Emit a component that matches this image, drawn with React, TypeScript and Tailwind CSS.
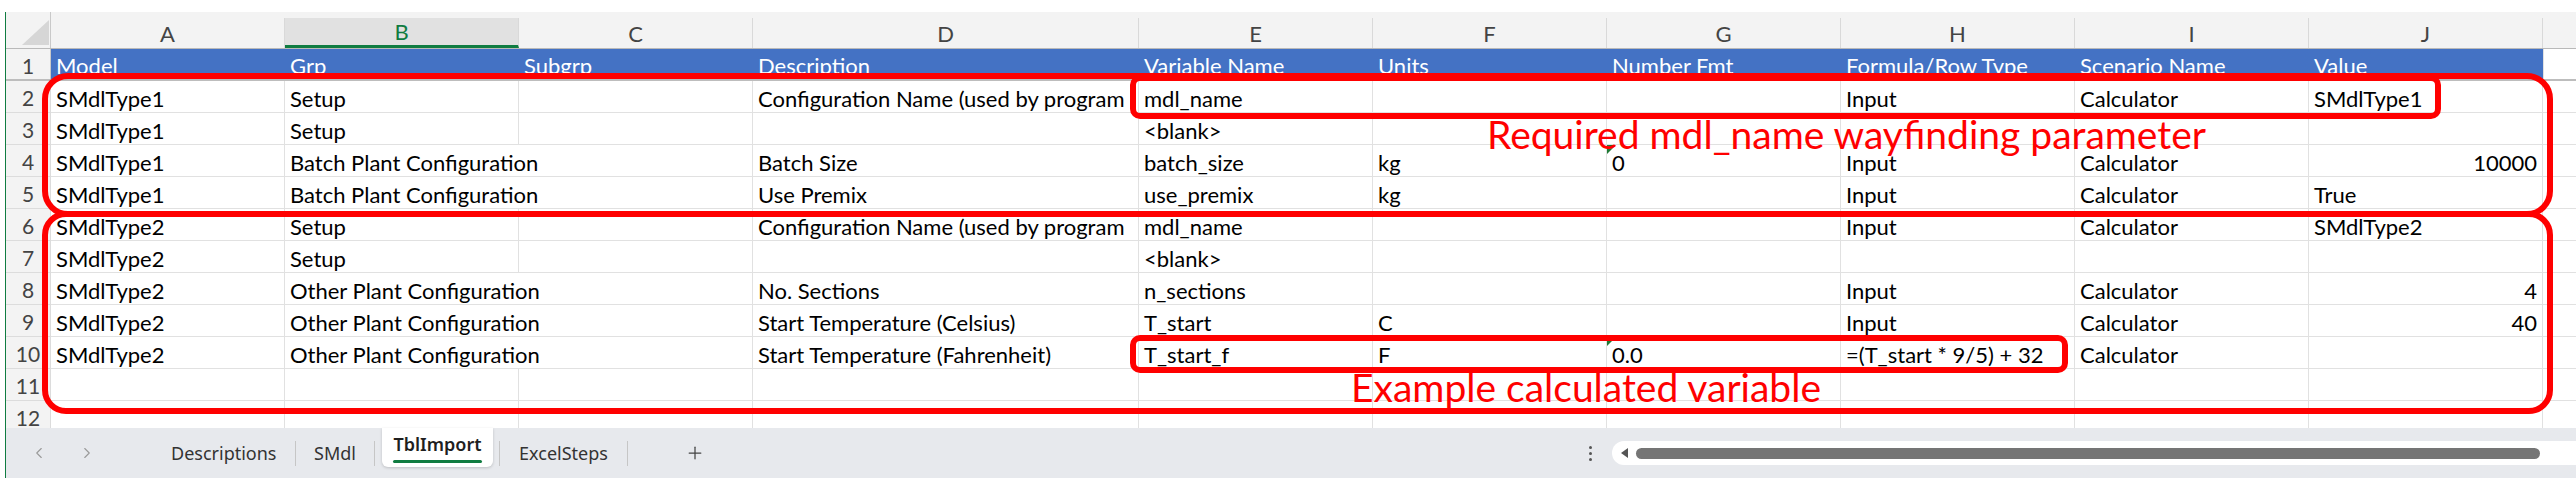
import { ChevronLeft, ChevronRight, Plus } from 'lucide-react'

type Col = 'A' | 'B' | 'C' | 'D' | 'E' | 'F' | 'G' | 'H' | 'I' | 'J' | 'K'

const COLS: Col[] = ['A', 'B', 'C', 'D', 'E', 'F', 'G', 'H', 'I', 'J', 'K']

const WIDTH: Record<Col, string> = {
  A: 'w-[234px]',
  B: 'w-[234px]',
  C: 'w-[234px]',
  D: 'w-[386px]',
  E: 'w-[234px]',
  F: 'w-[234px]',
  G: 'w-[234px]',
  H: 'w-[234px]',
  I: 'w-[234px]',
  J: 'w-[234px]',
  K: 'w-[60px]',
}

const HEADER = ['Model', 'Grp', 'Subgrp', 'Description', 'Variable Name', 'Units', 'Number Fmt', 'Formula/Row Type', 'Scenario Name', 'Value']

// A..J per row, row 2 onwards
const ROWS: string[][] = [
  ['SMdlType1', 'Setup', '', 'Configuration Name (used by program', 'mdl_name', '', '', 'Input', 'Calculator', 'SMdlType1'],
  ['SMdlType1', 'Setup', '', '', '<blank>', '', '', '', '', ''],
  ['SMdlType1', 'Batch Plant Configuration', '', 'Batch Size', 'batch_size', 'kg', '0', 'Input', 'Calculator', '10000'],
  ['SMdlType1', 'Batch Plant Configuration', '', 'Use Premix', 'use_premix', 'kg', '', 'Input', 'Calculator', 'True'],
  ['SMdlType2', 'Setup', '', 'Configuration Name (used by program', 'mdl_name', '', '', 'Input', 'Calculator', 'SMdlType2'],
  ['SMdlType2', 'Setup', '', '', '<blank>', '', '', '', '', ''],
  ['SMdlType2', 'Other Plant Configuration', '', 'No. Sections', 'n_sections', '', '', 'Input', 'Calculator', '4'],
  ['SMdlType2', 'Other Plant Configuration', '', 'Start Temperature (Celsius)', 'T_start', 'C', '', 'Input', 'Calculator', '40'],
  ['SMdlType2', 'Other Plant Configuration', '', 'Start Temperature (Fahrenheit)', 'T_start_f', 'F', '0.0', '=(T_start * 9/5) + 32', 'Calculator', ''],
  ['', '', '', '', '', '', '', '', '', ''],
  ['', '', '', '', '', '', '', '', '', ''],
]

const cellFont = "font-['Lato','Liberation_Sans',sans-serif]"

function GreenMark() {
  return (
    <svg className="absolute left-0 top-0" width="9" height="9" viewBox="0 0 9 9">
      <path d="M0 0H9L0 9Z" fill="#1f7a35" />
    </svg>
  )
}

function RowNum({ n, last }: { n: number; last?: boolean }) {
  return (
    <div
      className={`w-[45px] shrink-0 h-full flex items-center justify-center bg-[#f3f3f3] border-r border-[#c9c9c9] text-[21px] text-[#444] ${last ? '' : 'border-b border-[#dcdcdc]'}`}
    >
      <span className="pt-[3px]">{n}</span>
    </div>
  )
}

function DataRow({ n, cells }: { n: number; cells: string[] }) {
  const merged = cells[1].length > 12 && cells[2] === ''
  return (
    <div className="flex h-[32px] shrink-0">
      <RowNum n={n} />
      {COLS.map((c, i) => {
        if (c === 'C' && merged) return null
        const t = c === 'K' ? '' : cells[i]
        const w = c === 'B' && merged ? 'w-[468px]' : WIDTH[c]
        const right = c === 'J' && /^\d+$/.test(t)
        const mark = c === 'G' && (t === '0' || t === '0.0')
        return (
          <div
            key={c}
            className={`${w} shrink-0 h-full relative flex items-center px-[5px] border-r border-b border-[#e1e1e1] overflow-hidden whitespace-nowrap text-black ${right ? 'justify-end' : ''}`}
          >
            {mark && <GreenMark />}
            <span className="pt-[3px]">{t}</span>
          </div>
        )
      })}
    </div>
  )
}

function Sep() {
  return <span className="w-px h-[25px] bg-[#c6c6c6] shrink-0" />
}

export default function App() {
  return (
    <div className={`relative w-[2576px] h-[478px] overflow-hidden bg-white ${cellFont}`}>
      <div className="h-[12px]" />
      <div className="flex h-[466px]">
        <div className="w-[5px] shrink-0" />
        <div className="flex-1 flex flex-col border-l border-[#107c41] min-w-0">
          {/* column letters */}
          <div className="flex h-[37px] shrink-0 bg-[#f3f3f3] border-b border-[#b9b9b9]">
            <div className="w-[45px] shrink-0 relative border-r border-[#c9c9c9]">
              <svg className="absolute left-[16px] top-[8px]" width="28" height="26" viewBox="0 0 28 26">
                <path d="M27 0V25H0Z" fill="#d6d6d6" />
              </svg>
            </div>
            {COLS.map((c) => (
              <div
                key={c}
                className={`${WIDTH[c]} shrink-0 mt-[6px] flex items-center justify-center text-[22px] border-r border-[#d9d9d9] ${c === 'B' ? 'bg-[#e1e1e1] text-[#107c41] border-b-[3px] border-b-[#107c41]' : 'text-[#444]'}`}
              >
                {c === 'K' ? '' : c}
              </div>
            ))}
          </div>

          {/* grid */}
          <div className="flex-1 flex flex-col overflow-hidden text-[22px]">
            <div className="flex h-[32px] shrink-0 border-b-2 border-[#bdbdbd]">
              <RowNum n={1} last />
              {HEADER.map((h, i) => (
                <div
                  key={h}
                  className={`${WIDTH[COLS[i]]} shrink-0 h-full flex items-center px-[5px] bg-[#4472c4] text-white whitespace-nowrap overflow-hidden`}
                >
                  <span className="pt-[3px]">{h}</span>
                </div>
              ))}
              <div className="flex-1 border-l border-[#e1e1e1]" />
            </div>
            {ROWS.map((r, i) => (
              <DataRow key={i} n={i + 2} cells={r} />
            ))}
          </div>

          {/* sheet tab bar */}
          <div className="h-[50px] shrink-0 flex items-center bg-[#e7e9ed] text-[18px] text-[#333] font-['Noto_Sans','Liberation_Sans',sans-serif]">
            <div className="w-[146px] shrink-0 flex items-center pl-[24px] gap-[30px] text-[#9a9a9a]">
              <ChevronLeft size={18} strokeWidth={1.5} />
              <ChevronRight size={18} strokeWidth={1.5} />
            </div>
            <span className="w-[143px] shrink-0 pl-[19px]">Descriptions</span>
            <Sep />
            <span className="w-[78px] shrink-0 text-center">SMdl</span>
            <Sep />
            <div className="ml-[7px] mr-[6px] w-[111px] h-[39px] shrink-0 self-start bg-white rounded-b-[6px] shadow-[0_1px_3px_rgba(0,0,0,0.18)] flex flex-col items-center justify-center">
              <span className="font-semibold text-[#1f1f1f] leading-none pt-[2px]">TblImport</span>
              <span className="mt-[7px] h-[3px] w-[89px] bg-[#107c41] rounded-full" />
            </div>
            <Sep />
            <span className="w-[127px] shrink-0 text-center">ExcelSteps</span>
            <Sep />
            <Plus className="ml-[57px] text-[#444] shrink-0" size={20} strokeWidth={1.5} />
            <div className="ml-[884px] flex flex-col gap-[3px]">
              <span className="w-[3px] h-[3px] rounded-full bg-[#555]" />
              <span className="w-[3px] h-[3px] rounded-full bg-[#555]" />
              <span className="w-[3px] h-[3px] rounded-full bg-[#555]" />
            </div>
            <div className="ml-[20px] flex-1 h-[24px] bg-white rounded-l-full flex items-center pl-[9px]">
              <svg width="7" height="10" viewBox="0 0 7 10">
                <path d="M7 0V10L0 5Z" fill="#555" />
              </svg>
              <div className="ml-[8px] w-[904px] h-[11px] rounded-full bg-[#757575]" />
            </div>
          </div>
        </div>
      </div>

      {/* red annotations */}
      <div className="absolute left-[42px] top-[73px] w-[2511px] h-[144px] border-[6px] border-[#ff0000] rounded-[26px]" />
      <div className="absolute left-[42px] top-[211px] w-[2511px] h-[203px] border-[6px] border-[#ff0000] rounded-[24px]" />
      <div className="absolute left-[1130px] top-[75px] w-[1311px] h-[44px] border-[6px] border-[#ff0000] rounded-[10px]" />
      <div className="absolute left-[1130px] top-[335px] w-[938px] h-[38px] border-[6px] border-[#ff0000] rounded-[10px]" />
      <div className="absolute left-[1487px] top-[115px] text-[39px] leading-none text-[#ff0000] whitespace-nowrap">
        Required mdl_name wayfinding parameter
      </div>
      <div className="absolute left-[1351px] top-[368px] text-[39px] leading-none text-[#ff0000] whitespace-nowrap">
        Example calculated variable
      </div>
    </div>
  )
}
